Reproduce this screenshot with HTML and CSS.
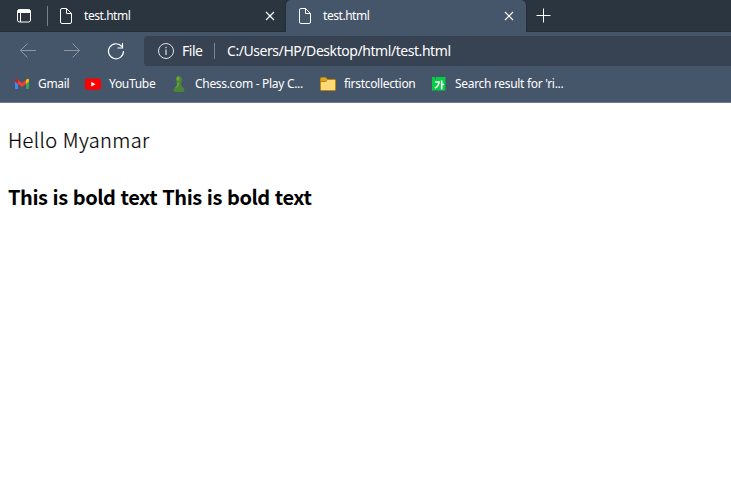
FILE: index.html
```html
<!DOCTYPE html>
<html lang="en">
<head>
<meta charset="utf-8">
<title>test.html</title>
<link rel="stylesheet" href="styles.css">
</head>
<body>
<header class="browser">
  <div class="tabs">
    <div class="tab-actions">
      <svg width="16" height="16" viewBox="0 0 16 16"><rect x="1.5" y="1.5" width="13" height="12.5" rx="2" fill="none" stroke="#fff"/><path d="M1.5 3.5q0-2 2-2h9q2 0 2 2v1.5h-13z" fill="#fff"/><path d="M4.5 5v9" stroke="#fff"/></svg>
    </div>
    <div class="tab tab-first">
      <svg class="doc" width="14" height="18" viewBox="0 0 14 18"><path d="M3 1.500h4.500l5 5v8.500q0 1.500-1.500 1.500H3q-1.500 0-1.500-1.500V3Q1.500 1.500 3 1.500zM7.500 1.500v5h5" fill="none" stroke="#fff"/></svg>
      <span class="tab-title">test.html</span>
      <svg class="close" width="10" height="10" viewBox="0 0 10 10"><path d="M1 1l8 8M9 1L1 9" stroke="#fff" stroke-width="1.200"/></svg>
    </div>
    <div class="tab tab-active">
      <svg class="doc" width="14" height="18" viewBox="0 0 14 18"><path d="M3 1.500h4.500l5 5v8.500q0 1.500-1.500 1.500H3q-1.500 0-1.500-1.500V3Q1.500 1.500 3 1.500zM7.500 1.500v5h5" fill="none" stroke="#fff"/></svg>
      <span class="tab-title">test.html</span>
      <svg class="close" width="10" height="10" viewBox="0 0 10 10"><path d="M1 1l8 8M9 1L1 9" stroke="#fff" stroke-width="1.200"/></svg>
    </div>
    <svg class="new-tab" width="15" height="15" viewBox="0 0 15 15"><path d="M7.500 .5v14M.5 7.500h14" stroke="#fff"/></svg>
  </div>
  <div class="toolbar">
    <svg class="nav" width="18" height="16" viewBox="0 0 18 16"><path d="M17 7.500H1.500M8.500 .5l-7 7 7 7" fill="none" stroke="#8c96a4"/></svg>
    <svg class="nav nav-forward" width="18" height="16" viewBox="0 0 18 16"><path d="M1 7.500h15.500M9.500 .5l7 7-7 7" fill="none" stroke="#8c96a4"/></svg>
    <svg class="nav-reload" width="18" height="18" viewBox="0 0 18 18"><path d="M16.500 9A7.500 7.500 0 1 1 14.800 4.500M15.500 1v5h-5" fill="none" stroke="#fff" stroke-width="1.200"/></svg>
    <div class="address">
      <svg width="18" height="18" viewBox="0 0 18 18"><circle cx="9" cy="9" r="7.500" fill="none" stroke="#dfe3e8"/><path d="M9 7.500v5.500M9 4.800v1.400" stroke="#dfe3e8" stroke-width="1.200"/></svg>
      <span class="scheme">File</span>
      <span class="path">C:/Users/HP/Desktop/html/test.html</span>
    </div>
  </div>
  <nav class="bookmarks">
    <a class="bookmark gmail"><svg width="16" height="16" viewBox="0 0 16 16"><path d="M1 5v7.500q0 .5.500.5H4V6z" fill="#4285f4"/><path d="M12 6v7h2.500q.5 0 .5-.5V5z" fill="#34a853"/><path d="M1 4v1.500L4 8V4L3 3q-2-1-2 1z" fill="#c5221f"/><path d="M4 4l4 3 4-3v4l-4 3-4-3z" fill="#ea4335"/><path d="M12 4v4l3-2.500V4q0-2-2-1z" fill="#fbbc04"/></svg><span>Gmail</span></a>
    <a class="bookmark youtube"><svg width="16" height="16" viewBox="0 0 16 16"><rect y="2.500" width="16" height="11.300" rx="2.500" fill="#f00"/><path d="M6.300 5.800v4.700l4.200-2.350z" fill="#fff"/></svg><span>YouTube</span></a>
    <a class="bookmark chess"><svg width="16" height="16" viewBox="0 0 16 16"><path d="M8 0a3 3 0 0 0-2.300 4.900L4.500 6.500h1.800C6.200 9 5.200 10.200 3.500 11.800 2.600 12.700 2.500 14 2.800 15.500q5.200 1 10.400 0c.3-1.500.2-2.800-.7-3.700C10.800 10.200 9.800 9 9.700 6.500h1.800l-1.200-1.600A3 3 0 0 0 8 0z" fill="#4b8537"/><path d="M8 .3a2.700 2.700 0 0 0-2.200 4.200h3M6.500 6.500h2Q8.300 10 4 12.500q2.500-3 2.500-6" fill="#71a53c"/></svg><span>Chess.com - Play C...</span></a>
    <a class="bookmark folder"><svg width="16" height="16" viewBox="0 0 16 16"><path d="M.5 3q0-1.500 1-1.500h4.300l1.500 2h7.200q1 0 1 1V13q0 1.500-1 1.500h-13q-1 0-1-1z" fill="#ffd978" stroke="#b88608"/><path d="M1 2h4.800l1.200 1.500-1.300 1.800H1z" fill="#daa81b"/><path d="M1 5.500h5l1.200-1.700" fill="none" stroke="#b88608"/></svg><span>firstcollection</span></a>
    <a class="bookmark search"><svg width="16" height="16" viewBox="0 0 16 16"><path d="M1 1h3l1 3V1h9.500v13.500H1z" fill="#04cf42"/><path d="M4 6h4c-.2 3-1.500 4.800-4 6M10.700 4.500v9M11 8.500h2" fill="none" stroke="#fff" stroke-width="1.600"/></svg><span>Search result for 'ri...</span></a>
  </nav>
</header>
<main>
  <p>Hello Myanmar</p>
  <p class="bold"><b>This is bold text</b> <strong>This is bold text</strong></p>
</main>
</body>
</html>
```
FILE: styles.css
```css
* { box-sizing: border-box; }
body { margin: 0; background: #fff; overflow: hidden; }
svg { display: block; flex: none; }
.browser {
  height: 103px;
  background: #45556a;
  border-bottom: 1px solid #6d7a8b;
  color: #fff;
  font: 12px/16px "Noto Sans", sans-serif;
  white-space: nowrap;
}
.tabs { display: flex; height: 32px; background: #2b3540; box-shadow: inset 0 -1px #242e39; }
.tab-actions { width: 48px; padding: 8px 0 0 16px; position: relative; }
.tab-actions::after { content: ""; position: absolute; right: 0; top: 6px; width: 1px; height: 20px; background: #74808c; }
.tab { display: flex; align-items: center; height: 32px; }
.tab-first { width: 238px; padding: 0 11px 0 11px; }
.tab-active { width: 240px; padding: 0 12px 0 12px; background: #45556a; border-radius: 5px 5px 0 0; box-shadow: 0 0 2px #17212c; clip-path: inset(0 -2px 0 -2px); }
.tab-title { margin-left: 11px; letter-spacing: -.45px; }
.close { margin-left: auto; }
.new-tab { margin: 8px 0 0 10px; }
.toolbar { display: flex; align-items: center; height: 38px; padding-left: 19px; }
.nav-forward { margin-left: 26px; }
.nav-reload { margin-left: 26px; }
.address { display: flex; align-items: center; flex: 1; height: 30px; margin-left: 19px; padding-left: 13px; border-radius: 4px 0 0 4px; background: #374253; font-size: 14px; }
.scheme { width: 33px; margin-left: 7px; border-right: 1px solid #7c8592; letter-spacing: -.5px; }
.path { margin-left: 12px; letter-spacing: -.44px; }
.bookmarks { display: flex; height: 28px; align-items: center; }
.bookmark { display: flex; align-items: center; gap: 8px; }
.gmail { width: 71px; margin-left: 14px; }
.youtube { width: 86px; }
.chess { width: 149px; }
.folder { width: 111px; }
.bookmark span { letter-spacing: -.31px; }
main { padding: 0 8px; color: #000; font: 20px/30px "Noto Sans CJK JP", sans-serif; }
p { margin: 22px 0 27px; }
p:first-child { font-weight: 300; letter-spacing: .4px; word-spacing: .5px; -webkit-text-stroke: .2px #000; }
.bold { letter-spacing: -.45px; word-spacing: 1px; }
```
